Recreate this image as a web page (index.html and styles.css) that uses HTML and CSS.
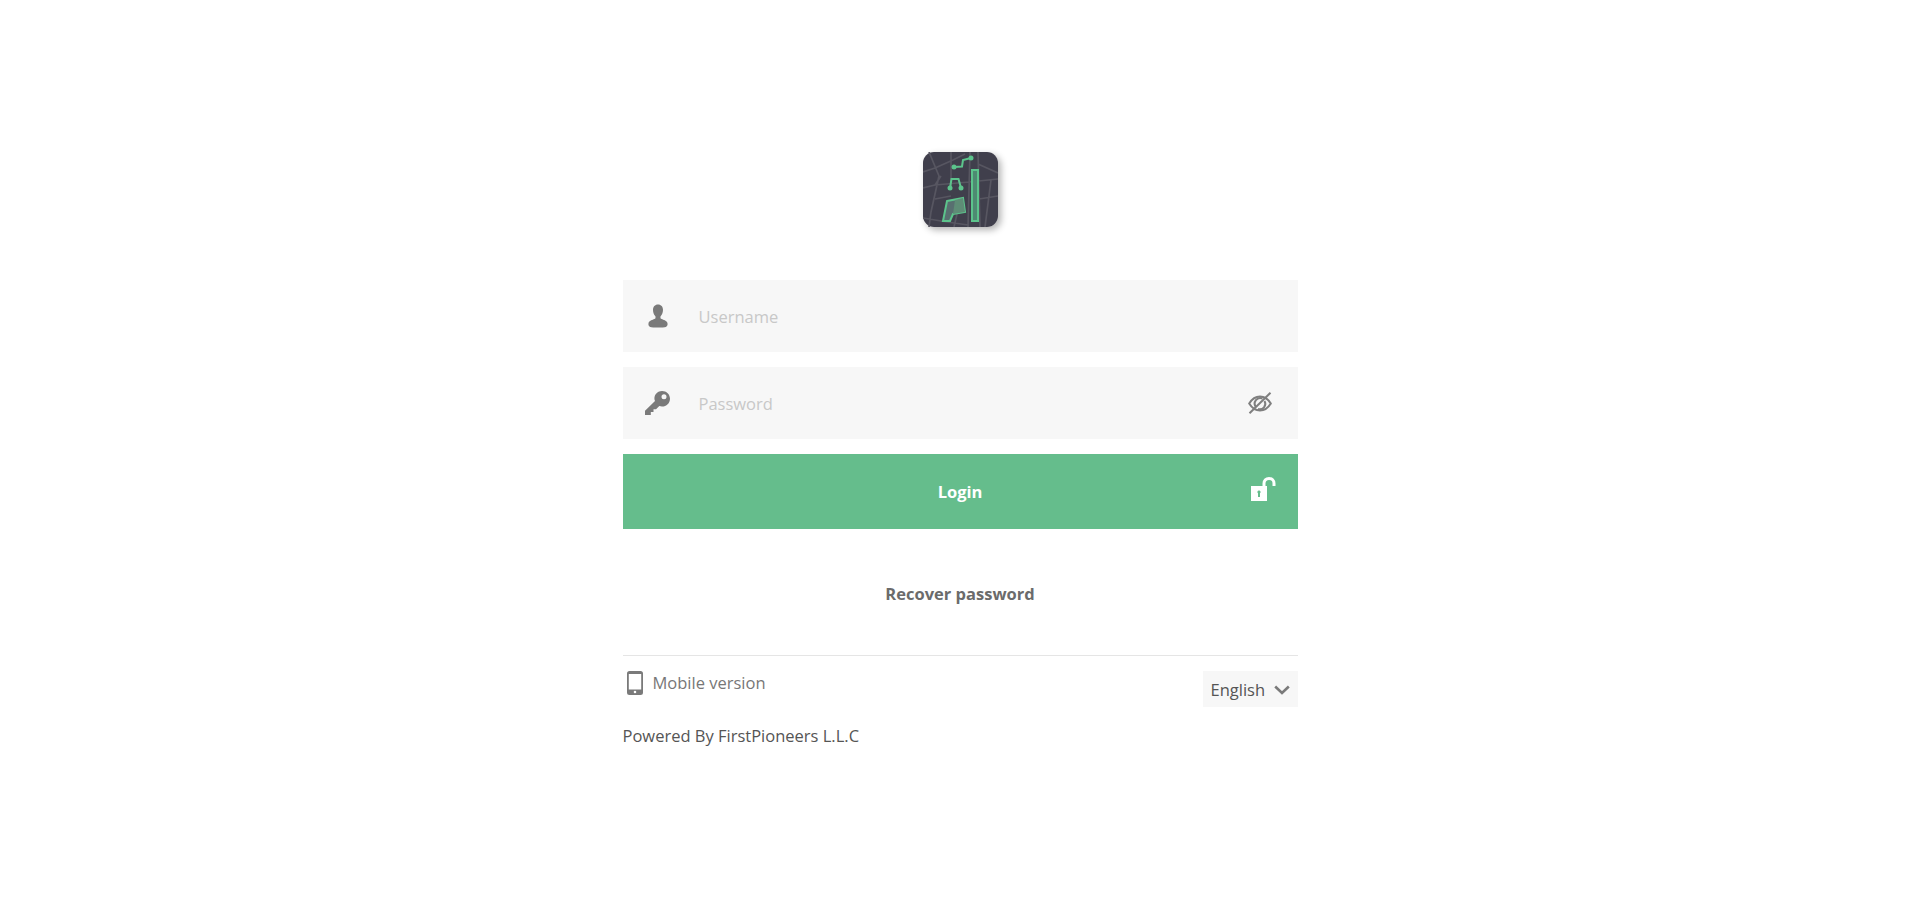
FILE: index.html
```html
<!DOCTYPE html>
<html lang="en">
  <head>
    <meta charset="UTF-8" />
    <title>Login</title>
    <link rel="stylesheet" href="styles.css">
  </head>
  <body>
    <div class="login">
      <div class="logo">
        <svg viewBox="0 0 75 75" width="75" height="75">
          <rect width="75" height="75" rx="11" fill="#403f4c" />
          <g fill="none" stroke="#575661" stroke-width="1.700">
            <path d="M0 20 L12 16 L30 8 L42 2 M0 36 L12 33 L46 30 L75 27 M0 66 L24 70 L45 73 M56 47 L75 44 M28 0 L28 34 M47 0 L45 75 M55 0 L57 75 M6 0 L16 24 L8 60 L6 75 M34 62 L31 75 M68 28 L62 75 M55 12 L75 21 M12 47 L28 44 M12 33 L18 24" />
          </g>
          <path d="M24 49 L40 46 L42 60 L30 62 L27 69 L20 69 Z" fill="#586f70" stroke="#5cc48c" stroke-width="2" />
          <path d="M32 48 L40 46 L42 60 L30 62 Z" fill="#5e8c76" />
          <rect x="49" y="18" width="6" height="51" fill="#4e8a72" stroke="#5cc48c" stroke-width="2" />
          <g fill="none" stroke="#5cc48c" stroke-width="2">
            <path d="M27 36 L28.500 27 L35.500 27 L38 36" />
            <path d="M31 15 L39 14.500 L40 8 L48 6" />
          </g>
          <g fill="#5cc48c">
            <circle cx="27" cy="36" r="2.500" />
            <circle cx="38" cy="36" r="2.500" />
            <circle cx="31" cy="15" r="2.500" />
            <circle cx="48" cy="6" r="2.500" />
          </g>
        </svg>
      </div>

      <form class="login-form">
        <div class="field">
          <span class="field-icon">
            <svg viewBox="0 0 20 24" width="20" height="25">
              <path fill="#7a7a7a" d="M10 0c3.200 0 5 2.300 5 5.300 0 2.700-1 5-2.400 6.400-.3.900-.2 1.900.3 2.500 2.300 1 6.100 1.800 6.600 4.500.3 1.500-.2 3.100-1.600 3.700-2.300.9-13.500.9-15.800 0-1.400-.6-1.900-2.200-1.600-3.700.5-2.700 4.300-3.500 6.600-4.500.5-.6.6-1.600.3-2.500C5.900 10.300 5 8 5 5.300 5 2.300 6.800 0 10 0z" />
            </svg>
          </span>
          <input type="text" placeholder="Username" />
        </div>
        <div class="field">
          <span class="field-icon">
            <svg viewBox="0 0 26 24" width="26" height="24">
              <path fill="#7a7a7a" fill-rule="evenodd" d="M17 0c4.500 0 8 3.400 8 7.700 0 4.400-3.500 7.800-8 7.800-1 0-1.900-.2-2.700-.5L11 18.300H8.500V21H5.800v3H0v-4.200l10-9.900c-.4-.9-.6-1.500-.6-2.500C9.400 3.400 12.800 0 17 0zm2 3.200a2.500 2.500 0 1 0 0 5 2.500 2.500 0 0 0 0-5z" />
            </svg>
          </span>
          <input type="password" placeholder="Password" />
          <span class="field-eye">
            <svg viewBox="0 0 24 22" width="24" height="22" fill="none" stroke="#7f7f7f" stroke-width="2">
              <path d="M1.200 11.500C4 6.900 7.700 4.500 12 4.500s8 2.400 10.800 7c-2.800 4.600-6.500 7-10.800 7s-8-2.400-10.800-7z" />
              <path d="M8 15a5.500 5.500 0 0 1 6.500-8.500" />
              <path d="M16.500 9a5.500 5.500 0 0 1-6.500 8" />
              <path d="M22.500 .8L1.500 21.200" />
            </svg>
          </span>
        </div>
        <button class="login-btn" type="button">
          Login
          <svg class="login-lock" viewBox="0 0 25 25" width="25" height="25">
            <path fill="none" stroke="#fff" stroke-width="3" d="M13 10V6.500C13 3.500 15 1.500 18 1.500S23 3.500 23 6.500V9" />
            <path fill="#fff" fill-rule="evenodd" d="M0 9h16v15H0zM8 13.500a1.500 1.500 0 0 0-1 2.700V20h2v-3.800a1.500 1.500 0 0 0-1-2.700z" />
          </svg>
        </button>
      </form>

      <a class="recover" href="#">Recover password</a>

      <div class="footer">
        <a class="mobile" href="#">
          <svg viewBox="0 0 16 24" width="16" height="24">
            <path fill="#7a7a7a" fill-rule="evenodd" d="M2.500 0h11A2.500 2.500 0 0 1 16 2.500v19a2.500 2.500 0 0 1-2.500 2.500h-11A2.500 2.500 0 0 1 0 21.500v-19A2.500 2.500 0 0 1 2.500 0zM1.800 3v15.500h12.400V3zM8 19.700a1.300 1.300 0 1 0 0 2.600 1.300 1.300 0 0 0 0-2.600z" />
          </svg>
          Mobile version
        </a>
        <div class="lang">
          English
          <svg viewBox="0 0 16 10" width="16" height="10" fill="none" stroke="#7a7a7a" stroke-width="2.600">
            <path d="M1.200 1.500L8 8l6.800-6.500" />
          </svg>
        </div>
      </div>
      <p class="powered">Powered By FirstPioneers L.L.C</p>
    </div>
  </body>
</html>
```

FILE: styles.css
```css
body {
  margin: 0;
  font-family: "Open Sans", sans-serif;
  font-size: 16.5px;
  line-height: 22px;
  background-color: #fff;
  color: #555;
}
.login {
  width: 675px;
  margin: 0 auto;
  padding-top: 152px;
}
.logo {
  width: 75px;
  height: 75px;
  margin: 0 auto 53px;
  border-radius: 11px;
  box-shadow: 3px 3px 7px rgba(0, 0, 0, 0.3);
}
.logo svg {
  display: block;
}
.field {
  display: flex;
  align-items: center;
  height: 72px;
  margin-bottom: 15px;
  background-color: #f7f7f7;
}
.field-icon {
  display: flex;
  justify-content: center;
  width: 71px;
  margin-right: 5px;
  flex-shrink: 0;
}
.field input {
  flex: 1;
  border: none;
  outline: none;
  padding: 0;
  height: 100%;
  box-sizing: border-box;
  background: transparent;
  font-family: inherit;
  font-size: 16.5px;
  color: #555;
}
.field input::placeholder {
  color: #c8c8c8;
  opacity: 1;
}
.field-eye {
  display: flex;
  margin-right: 26px;
}
.login-btn {
  display: block;
  position: relative;
  width: 100%;
  height: 75px;
  border: none;
  padding: 0;
  background-color: #65bd8c;
  color: #fff;
  font-family: inherit;
  font-size: 16.5px;
  font-weight: 700;
  cursor: pointer;
}
.login-lock {
  position: absolute;
  right: 22px;
  top: 23px;
}
.recover {
  display: block;
  margin-top: 54px;
  text-align: center;
  text-decoration: none;
  font-weight: 700;
  color: #6b6b6b;
}
.footer {
  display: flex;
  justify-content: space-between;
  align-items: flex-start;
  margin-top: 50px;
  padding-top: 15px;
  border-top: 1px solid #e5e5e5;
}
.mobile {
  display: flex;
  align-items: center;
  gap: 10px;
  padding-left: 4px;
  text-decoration: none;
  color: #777;
}
.lang {
  display: flex;
  align-items: center;
  gap: 9px;
  height: 36px;
  width: 95px;
  box-sizing: border-box;
  padding: 1px 0 0 8px;
  background-color: #f7f7f7;
  color: #555;
}
.powered {
  margin: 18px 0 0;
  color: #555;
}
```
